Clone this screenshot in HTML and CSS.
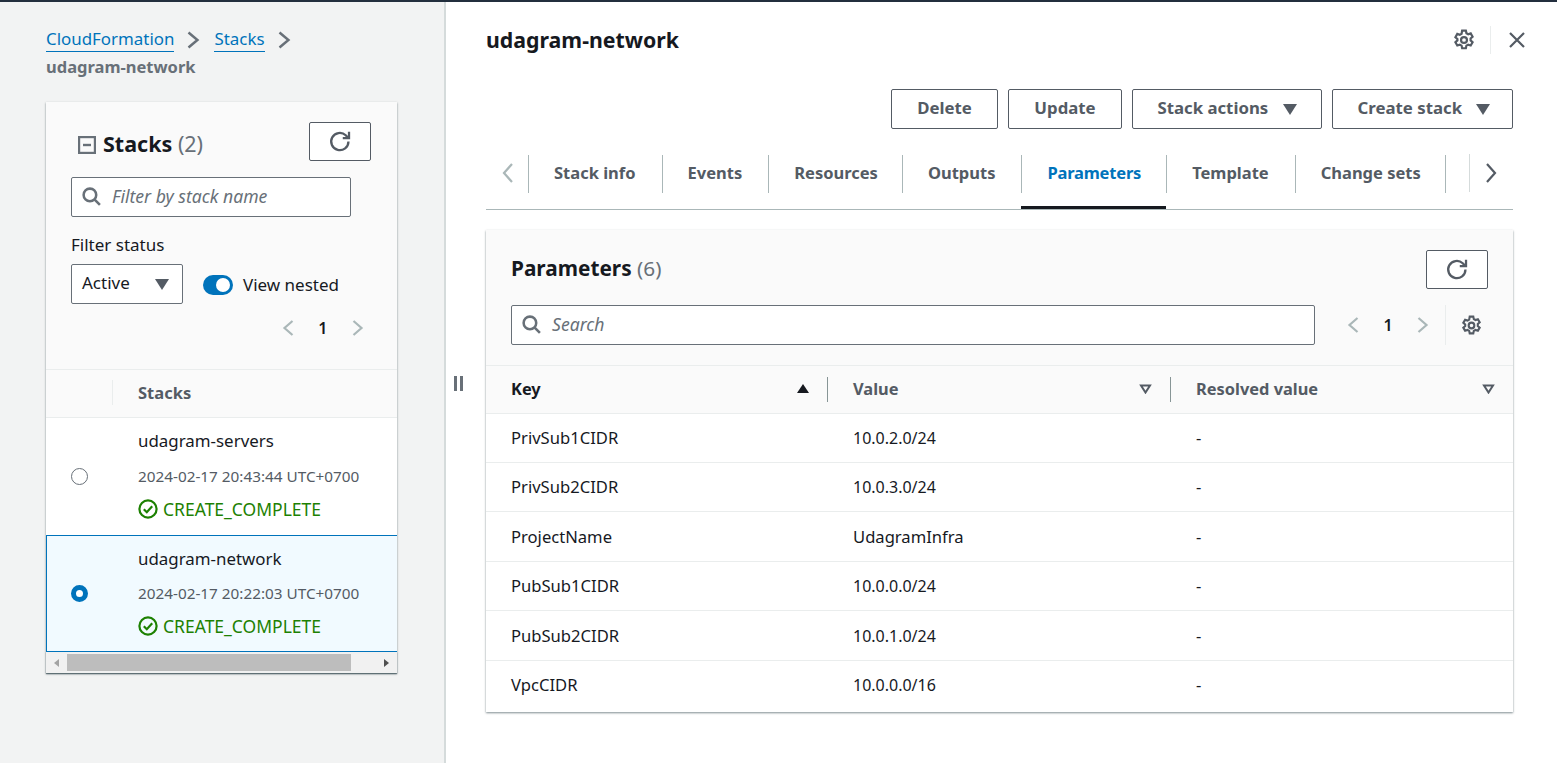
FILE: index.html
```html
<!DOCTYPE html>
<html lang="en">
<head>
    <meta charset="UTF-8">
    <meta name="viewport" content="width=device-width, initial-scale=1.0">
    <title>udagram-network</title>
    <link rel="stylesheet" href="styles.css">
</head>
<body>
    <div class="layout">
        <aside class="side">
            <nav class="crumbs">
                <a href="#">CloudFormation</a>
                <svg class="crumb-sep" viewBox="0 0 16 16"><path d="M4 2.500 10.500 8 4 13.500"/></svg>
                <a href="#">Stacks</a>
                <svg class="crumb-sep" viewBox="0 0 16 16"><path d="M4 2.500 10.500 8 4 13.500"/></svg>
                <div class="crumb-current">udagram-network</div>
            </nav>

            <section class="stack-card">
                <div class="stack-head">
                    <div class="stack-title">
                        <svg class="collapse" viewBox="0 0 18 18"><rect x="1" y="1" width="16" height="16"/><path d="M5 9h8"/></svg>
                        <h2>Stacks <span class="count">(2)</span></h2>
                    </div>
                    <button class="btn btn-icon">
                        <svg class="icon-refresh" viewBox="0 0 22 22"><path d="M18 11a7.600 7.600 0 1 1-2.400-5.500L18 8"/><path d="M18.500 2.500V8H13"/></svg>
                    </button>
                </div>
                <div class="search search-side">
                    <svg class="icon-search" viewBox="0 0 20 20"><circle cx="8.500" cy="8.500" r="6"/><path d="m13 13 5 5"/></svg>
                    <span>Filter by stack name</span>
                </div>
                <div class="filter-label">Filter status</div>
                <div class="filter-row">
                    <div class="select">Active <i class="caret"></i></div>
                    <div class="toggle"><i class="toggle-knob"></i></div>
                    <span class="toggle-label">View nested</span>
                </div>
                <div class="pager pager-side">
                    <svg class="pager-arrow" viewBox="0 0 16 18"><path d="M12.500 2 4.500 9l8 7"/></svg>
                    <b>1</b>
                    <svg class="pager-arrow" viewBox="0 0 16 18"><path d="m3.500 2 8 7-8 7"/></svg>
                </div>

                <div class="stack-cols">
                    <div class="stack-col-blank"></div>
                    <div class="stack-col-name">Stacks</div>
                </div>
                <div class="stack-row">
                    <div class="radio-cell"><i class="radio"></i></div>
                    <div class="stack-info">
                        <div class="stack-name">udagram-servers</div>
                        <div class="stack-date">2024-02-17 20:43:44 UTC+0700</div>
                        <div class="stack-status">
                            <svg class="icon-ok" viewBox="0 0 20 20"><circle cx="10" cy="10" r="8.600"/><path d="m5.800 10.200 3 3 5.400-6"/></svg>
                            CREATE_COMPLETE
                        </div>
                    </div>
                </div>
                <div class="stack-row selected">
                    <div class="radio-cell"><i class="radio checked"></i></div>
                    <div class="stack-info">
                        <div class="stack-name">udagram-network</div>
                        <div class="stack-date">2024-02-17 20:22:03 UTC+0700</div>
                        <div class="stack-status">
                            <svg class="icon-ok" viewBox="0 0 20 20"><circle cx="10" cy="10" r="8.600"/><path d="m5.800 10.200 3 3 5.400-6"/></svg>
                            CREATE_COMPLETE
                        </div>
                    </div>
                </div>
                <div class="scrollbar">
                    <i class="arrow-left"></i>
                    <div class="scroll-track"><div class="scroll-thumb"></div></div>
                    <i class="arrow-right"></i>
                </div>
            </section>
        </aside>

        <main class="detail">
            <div class="handle"></div>

            <header class="detail-head">
                <h1>udagram-network</h1>
                <div class="detail-tools">
                    <svg class="icon-gear" viewBox="0 0 20 20"><path d="M8.300 1.500h3.400l.5 2.400 1.600.9 2.300-.8 1.700 3-1.800 1.600v1.800l1.800 1.600-1.700 3-2.300-.8-1.600.9-.5 2.400H8.300l-.5-2.400-1.600-.9-2.300.8-1.700-3 1.800-1.600V9.100L2.200 7.500l1.700-3 2.300.8 1.600-.9z"/><circle cx="10" cy="10" r="2.700"/></svg>
                    <i class="tool-sep"></i>
                    <svg class="icon-close" viewBox="0 0 18 18"><path d="m2 2 14 14M16 2 2 16"/></svg>
                </div>
            </header>

            <div class="actions">
                <button class="btn btn-delete">Delete</button>
                <button class="btn btn-update">Update</button>
                <button class="btn btn-stack">Stack actions <i class="caret"></i></button>
                <button class="btn btn-create">Create stack <i class="caret"></i></button>
            </div>

            <div class="tabs">
                <svg class="tab-arrow off" viewBox="0 0 16 22"><path d="M12 2 4 11l8 9"/></svg>
                <div class="tab-list">
                    <a class="tab" href="#">Stack info</a>
                    <a class="tab" href="#">Events</a>
                    <a class="tab tab-narrow" href="#">Resources</a>
                    <a class="tab" href="#">Outputs</a>
                    <a class="tab active" href="#">Parameters</a>
                    <a class="tab" href="#">Template</a>
                    <a class="tab tab-tight" href="#">Change sets</a>
                </div>
                <i class="tab-fade"></i>
                <svg class="tab-arrow" viewBox="0 0 16 22"><path d="m4 2 8 9-8 9"/></svg>
            </div>

            <section class="param-card">
                <div class="param-head">
                    <h2>Parameters <span class="count">(6)</span></h2>
                    <button class="btn btn-icon">
                        <svg class="icon-refresh" viewBox="0 0 22 22"><path d="M18 11a7.600 7.600 0 1 1-2.400-5.500L18 8"/><path d="M18.500 2.500V8H13"/></svg>
                    </button>
                </div>
                <div class="param-tools">
                    <div class="search search-main">
                        <svg class="icon-search" viewBox="0 0 20 20"><circle cx="8.500" cy="8.500" r="6"/><path d="m13 13 5 5"/></svg>
                        <span>Search</span>
                    </div>
                    <div class="pager pager-main">
                        <svg class="pager-arrow" viewBox="0 0 16 18"><path d="M12.500 2 4.500 9l8 7"/></svg>
                        <b>1</b>
                        <svg class="pager-arrow" viewBox="0 0 16 18"><path d="m3.500 2 8 7-8 7"/></svg>
                    </div>
                    <i class="pager-sep"></i>
                    <svg class="icon-gear gear-small" viewBox="0 0 20 20"><path d="M8.300 1.500h3.400l.5 2.400 1.600.9 2.300-.8 1.700 3-1.800 1.600v1.800l1.800 1.600-1.700 3-2.300-.8-1.600.9-.5 2.400H8.300l-.5-2.400-1.600-.9-2.300.8-1.700-3 1.800-1.600V9.100L2.200 7.500l1.700-3 2.300.8 1.600-.9z"/><circle cx="10" cy="10" r="2.700"/></svg>
                </div>

                <table class="param-table">
                    <thead>
                        <tr>
                            <th class="col-key sorted"><div class="th-in">Key <i class="sort-up"></i></div></th>
                            <th class="col-value"><div class="th-in">Value <svg class="sort-down" viewBox="0 0 12 10"><path d="M1.500 1.500h9L6 8.500z"/></svg></div></th>
                            <th class="col-resolved"><div class="th-in">Resolved value <svg class="sort-down" viewBox="0 0 12 10"><path d="M1.500 1.500h9L6 8.500z"/></svg></div></th>
                        </tr>
                    </thead>
                    <tbody>
                        <tr><td>PrivSub1CIDR</td><td class="ip">10.0.2.0/24</td><td>-</td></tr>
                        <tr><td>PrivSub2CIDR</td><td class="ip">10.0.3.0/24</td><td>-</td></tr>
                        <tr class="tall"><td>ProjectName</td><td>UdagramInfra</td><td>-</td></tr>
                        <tr><td>PubSub1CIDR</td><td class="ip">10.0.0.0/24</td><td>-</td></tr>
                        <tr class="tall"><td>PubSub2CIDR</td><td class="ip">10.0.1.0/24</td><td>-</td></tr>
                        <tr class="last"><td>VpcCIDR</td><td class="ip">10.0.0.0/16</td><td>-</td></tr>
                    </tbody>
                </table>
            </section>
        </main>
    </div>
</body>
</html>
```

FILE: styles.css
```css
* {
    box-sizing: border-box;
}
html, body {
    height: 100%;
}
body {
    margin: 0;
    overflow: hidden;
    font-family: "Noto Sans", "Open Sans", sans-serif;
    font-size: 16px;
    color: #16191f;
    background: #fff;
}
svg {
    fill: none;
    stroke: currentColor;
    display: block;
    flex: none;
}
h1, h2 {
    margin: 0;
}
.layout {
    display: flex;
    height: 763px;
    border-top: 2px solid #232f3e;
}

/* left column */
.side {
    width: 446px;
    flex: none;
    padding: 25px 48px 0 46px;
    background: #f2f3f3;
    border-right: 2px solid #d5dbdb;
}
.crumbs {
    display: flex;
    flex-wrap: wrap;
    align-items: center;
    align-content: flex-start;
    height: 75px;
}
.crumbs a {
    color: #0073bb;
    text-decoration: none;
    border-bottom: 1px solid #0073bb;
    font-size: 16.9px;
    line-height: 24px;
    height: 25px;
}
.crumb-sep {
    width: 22px;
    height: 22px;
    margin: 0 9px;
    color: #687078;
    stroke-width: 1.8;
}
.crumb-current {
    width: 100%;
    margin-top: 3px;
    font-size: 16.5px;
    line-height: 24px;
    font-weight: 700;
    color: #687078;
}
.stack-card {
    width: 351px;
    background: #fafafa;
    box-shadow: 0 1px 2px rgba(0, 28, 36, 0.5);
}
.stack-head {
    display: flex;
    justify-content: space-between;
    padding: 20px 26px 0 32px;
    height: 75px;
}
.stack-title {
    display: flex;
    align-items: center;
    height: 44px;
}
.stack-title h2 {
    font-size: 21.5px;
    line-height: 44px;
    font-weight: 700;
}
.count {
    font-weight: 400;
    color: #687078;
}
.collapse {
    width: 18px;
    height: 18px;
    margin: 2px 7px 0 0;
    color: #687078;
    stroke-width: 2.4;
}
.btn {
    font: inherit;
    font-size: 16.8px;
    font-weight: 700;
    color: #545b64;
    background: #fff;
    border: 1px solid #545b64;
    border-radius: 2px;
    height: 40px;
    padding: 0 0 3px;
}
.btn-icon {
    width: 62px;
    height: 39px;
    display: flex;
    align-items: center;
    justify-content: center;
    padding: 0;
}
.icon-refresh {
    width: 25px;
    height: 25px;
    stroke-width: 2;
    color: #545b64;
}
.search {
    display: flex;
    align-items: center;
    height: 40px;
    background: #fff;
    border: 1px solid #687078;
    border-radius: 2px;
    padding: 0 0 2px 9px;
    font-size: 17.6px;
    font-style: italic;
    color: #687078;
}
.icon-search {
    width: 21px;
    height: 21px;
    margin-right: 10px;
    stroke-width: 2.4;
    color: #687078;
}
.search-side {
    width: 280px;
    margin-left: 25px;
}
.filter-label {
    margin: 17px 0 0 25px;
    font-size: 17px;
    line-height: 22px;
}
.filter-row {
    display: flex;
    align-items: center;
    margin: 8px 0 0 25px;
    height: 40px;
}
.select {
    display: flex;
    align-items: center;
    justify-content: space-between;
    width: 112px;
    height: 40px;
    padding: 0 13px 3px 10px;
    background: #fff;
    border: 1px solid #687078;
    border-radius: 2px;
    font-size: 17px;
}
.select .caret {
    margin-top: 3px;
}
.caret {
    display: inline-block;
    width: 0;
    height: 0;
    border-left: 7px solid transparent;
    border-right: 7px solid transparent;
    border-top: 11px solid #545b64;
}
.toggle {
    width: 30px;
    height: 20px;
    margin: 2px 10px 0 20px;
    padding: 3px;
    border-radius: 10px;
    background: #0073bb;
    display: flex;
    justify-content: flex-end;
}
.toggle-knob {
    width: 14px;
    height: 14px;
    border-radius: 50%;
    background: #fff;
}
.toggle-label {
    font-size: 17px;
}
.pager {
    display: flex;
    align-items: center;
}
.pager b {
    font-size: 16px;
    font-weight: 600;
}
.pager-arrow {
    width: 16px;
    height: 18px;
    stroke-width: 2.2;
    color: #aab7b8;
}
.pager-side {
    justify-content: flex-end;
    gap: 22.5px;
    height: 24px;
    margin-top: 12px;
    padding-right: 31px;
}
.stack-cols {
    display: flex;
    align-items: center;
    height: 49px;
    margin-top: 29px;
    padding-bottom: 2px;
    border-top: 1px solid #eaeded;
    border-bottom: 1px solid #eaeded;
    font-size: 16.5px;
    font-weight: 700;
    color: #545b64;
}
.stack-col-blank {
    width: 67px;
    height: 25px;
    border-right: 1px solid #eaeded;
}
.stack-col-name {
    padding-left: 25px;
}
.stack-row {
    display: flex;
    height: 117px;
    background: #fff;
}
.stack-row.selected {
    background: #f1faff;
    border: 1px solid #0073bb;
    border-right: 0;
}
.radio-cell {
    width: 92px;
    display: flex;
    align-items: center;
    padding-left: 25px;
}
.selected .radio-cell {
    width: 91px;
    padding-left: 24px;
}
.radio {
    width: 17px;
    height: 17px;
    border-radius: 50%;
    border: 1.5px solid #687078;
    background: #fff;
}
.radio.checked {
    border: 5px solid #0073bb;
}
.stack-info {
    padding-top: 10px;
    white-space: nowrap;
}
.stack-name {
    font-size: 16.9px;
    line-height: 26px;
}
.stack-date {
    margin-top: 9px;
    font-size: 15.3px;
    line-height: 26px;
    color: #545b64;
}
.selected .stack-date {
    margin-top: 8px;
}
.stack-status {
    display: flex;
    align-items: center;
    margin-top: 7px;
    font-size: 17.5px;
    line-height: 26px;
    color: #1d8102;
}
.icon-ok {
    width: 20px;
    height: 20px;
    margin-right: 5px;
    stroke-width: 2.2;
}
.scrollbar {
    display: flex;
    align-items: center;
    height: 21px;
    background: #f1f1f1;
    box-shadow: 0 1px 1px rgba(0, 28, 36, 0.4);
}
.arrow-left, .arrow-right {
    width: 21px;
    flex: none;
    display: flex;
    justify-content: center;
}
.arrow-left::before, .arrow-right::before {
    content: "";
    border-top: 4.5px solid transparent;
    border-bottom: 4.5px solid transparent;
}
.arrow-left::before {
    border-right: 5px solid #a3a3a3;
}
.arrow-right::before {
    border-left: 5px solid #505050;
}
.scroll-track {
    flex: 1;
    height: 17px;
}
.scroll-thumb {
    width: 284px;
    height: 17px;
    background: #bdbdbd;
}

/* right column */
.detail {
    position: relative;
    flex: 1;
    padding: 0 44px 0 40px;
}
.handle {
    position: absolute;
    left: 8px;
    top: 374px;
    width: 9px;
    height: 15px;
    border-left: 3px solid #687078;
    border-right: 3px solid #687078;
}
.detail-head {
    display: flex;
    justify-content: space-between;
    align-items: center;
    height: 76px;
}
.detail-head h1 {
    font-size: 21.3px;
    line-height: 76px;
    font-weight: 700;
}
.detail-tools {
    display: flex;
    align-items: center;
    margin-right: -13px;
}
.icon-gear {
    width: 22px;
    height: 22px;
    stroke-width: 2;
    color: #545b64;
}
.tool-sep {
    width: 1px;
    height: 28px;
    margin: 0 17px 0 15px;
    background: #eaeded;
}
.icon-close {
    width: 18px;
    height: 18px;
    stroke-width: 2.2;
    color: #545b64;
}
.actions {
    display: flex;
    justify-content: flex-end;
    gap: 10px;
    margin-top: 11px;
}
.btn-delete {
    width: 107px;
}
.btn-update {
    width: 114px;
}
.btn-stack {
    width: 190px;
}
.btn-create {
    width: 181px;
    padding-left: 3px;
}
.actions .caret {
    margin-left: 10px;
    vertical-align: -1px;
}
.tabs {
    display: flex;
    align-items: center;
    height: 81px;
    border-bottom: 1px solid #aab7b8;
}
.tab-arrow {
    width: 16px;
    height: 22px;
    margin: 7px 6px 0 13px;
    stroke-width: 2.2;
    color: #545b64;
}
.tab-arrow.off {
    margin: 7px 12px 0 14px;
    color: #aab7b8;
}
.tab-list {
    display: flex;
    height: 100%;
    padding-top: 26px;
}
.tab {
    position: relative;
    height: 54px;
    padding: 6px 26px 0;
    font-size: 16.5px;
    line-height: 24px;
    font-weight: 700;
    color: #545b64;
    text-decoration: none;
    white-space: nowrap;
}
.tab-tight {
    padding-right: 25px;
}
.tab-narrow {
    padding-right: 24px;
}
.tab::before {
    content: "";
    position: absolute;
    left: 0;
    top: 0;
    height: 38px;
    border-left: 1px solid #aab7b8;
}
.tab:last-child::after {
    content: "";
    position: absolute;
    right: 0;
    top: 0;
    height: 38px;
    border-right: 1px solid #aab7b8;
}
.tab.active {
    padding-right: 25px;
    letter-spacing: -0.2px;
    color: #0073bb;
    border-bottom: 3px solid #16191f;
}
.tab-fade {
    width: 1px;
    height: 38px;
    margin: 7px 0 0 23px;
    background: #d5dbdb;
}
.param-card {
    margin-top: 20px;
    background: #fafafa;
    box-shadow: 0 1px 2px rgba(0, 28, 36, 0.5);
}
.param-head {
    display: flex;
    justify-content: space-between;
    align-items: center;
    padding: 20px 25px 0;
}
.param-head h2 {
    font-size: 20.8px;
    line-height: 37px;
    font-weight: 700;
    margin-bottom: 2px;
}
.param-tools {
    display: flex;
    align-items: center;
    margin-top: 16px;
    padding: 0 25px;
    height: 40px;
}
.search-main {
    width: 804px;
}
.pager-main {
    gap: 22.5px;
    margin-left: 30px;
}
.pager-sep {
    width: 1px;
    height: 40px;
    margin-left: 14px;
    background: #eaeded;
}
.gear-small {
    width: 21px;
    height: 21px;
    margin-left: 15px;
}
.param-table {
    width: 100%;
    margin-top: 20px;
    border-collapse: collapse;
    table-layout: fixed;
}
.param-table th {
    height: 48px;
    padding: 0 0 1px;
    font-weight: 700;
    font-size: 16.4px;
    text-align: left;
    color: #545b64;
    border-top: 1px solid #eaeded;
    border-bottom: 1px solid #eaeded;
}
.param-table th.sorted {
    color: #16191f;
}
.col-key {
    width: 342px;
}
.col-value {
    width: 343px;
}
.th-in {
    display: flex;
    justify-content: space-between;
    align-items: center;
    height: 25px;
    padding: 0 18px 1px 25px;
    border-right: 1px solid #879596;
}
.col-resolved .th-in {
    border-right: 0;
}
.sort-up {
    width: 0;
    height: 0;
    border-left: 6.5px solid transparent;
    border-right: 6.5px solid transparent;
    border-bottom: 9px solid #16191f;
}
.sort-down {
    width: 13px;
    height: 10px;
    stroke-width: 2;
    color: #545b64;
}
.param-table td {
    height: 49px;
    padding: 0 25px 2px;
    font-size: 16.6px;
    background: #fff;
    color: #16191f;
    border-bottom: 1px solid #eaeded;
}
.param-table td.ip {
    padding-bottom: 0;
    font-size: 16px;
}
.param-table tr.tall td {
    height: 50px;
    padding-bottom: 0;
}
.param-table tr.last td {
    height: 51px;
    padding-bottom: 3px;
    border-bottom: 0;
}
```
